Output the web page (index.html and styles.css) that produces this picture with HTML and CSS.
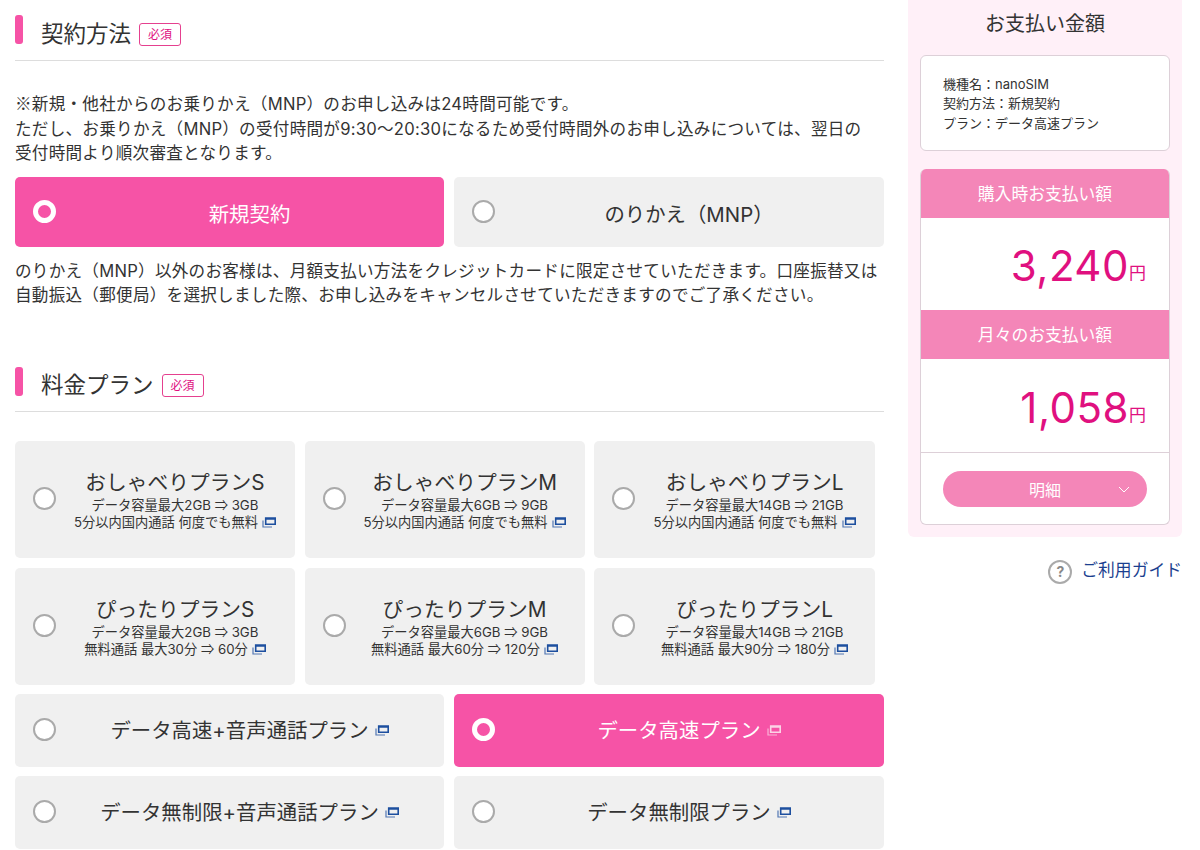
FILE: index.html
```html
<!DOCTYPE html>
<html lang="ja">
<head>
  <meta charset="utf-8">
  <title>お申し込み</title>
  <link rel="stylesheet" href="styles.css">
</head>
<body>
  <svg class="svg-defs" width="0" height="0">
    <symbol id="win" viewBox="0 0 14 11">
      <path d="M3.7 1h9.5v6.3h-9.5z M3.7 2h9.5" fill="none" stroke="currentColor" stroke-width="1.6"/>
      <path d="M1 3.5v6.5h9" fill="none" stroke="currentColor" stroke-width="1.2" opacity=".75"/>
    </symbol>
  </svg>
  <div class="page">
    <main class="main">
      <section class="contract">
        <h2 class="heading">契約方法<span class="required">必須</span></h2>
        <p class="note"><span class="cjk">※</span>新規・他社からのお乗りかえ（MNP）のお申し込みは24時間可能です。<br>ただし、お乗りかえ（MNP）の受付時間が9:30～20:30になるため受付時間外のお申し込みについては、翌日の<br>受付時間より順次審査となります。</p>
        <div class="row-2">
          <div class="choice tall selected"><span class="radio"></span>新規契約</div>
          <div class="choice tall"><span class="radio"></span>のりかえ（MNP）</div>
        </div>
        <p class="note after">のりかえ（MNP）以外のお客様は、月額支払い方法をクレジットカードに限定させていただきます。口座振替又は<br>自動振込（郵便局）を選択しました際、お申し込みをキャンセルさせていただきますのでご了承ください。</p>
      </section>

      <section class="plans">
        <h2 class="heading">料金プラン<span class="required">必須</span></h2>
        <div class="row-3">
          <div class="plan"><span class="radio"></span>
            <div class="plan-name">おしゃべりプランS</div>
            <div class="plan-sub">データ容量最大2GB <span class="cjk">⇒</span> 3GB</div>
            <div class="plan-sub">5分以内国内通話 何度でも無料<svg class="win"><use href="#win"/></svg></div>
          </div>
          <div class="plan"><span class="radio"></span>
            <div class="plan-name">おしゃべりプランM</div>
            <div class="plan-sub">データ容量最大6GB <span class="cjk">⇒</span> 9GB</div>
            <div class="plan-sub">5分以内国内通話 何度でも無料<svg class="win"><use href="#win"/></svg></div>
          </div>
          <div class="plan"><span class="radio"></span>
            <div class="plan-name">おしゃべりプランL</div>
            <div class="plan-sub">データ容量最大14GB <span class="cjk">⇒</span> 21GB</div>
            <div class="plan-sub">5分以内国内通話 何度でも無料<svg class="win"><use href="#win"/></svg></div>
          </div>
          <div class="plan"><span class="radio"></span>
            <div class="plan-name">ぴったりプランS</div>
            <div class="plan-sub">データ容量最大2GB <span class="cjk">⇒</span> 3GB</div>
            <div class="plan-sub">無料通話 最大30分 <span class="cjk">⇒</span> 60分<svg class="win"><use href="#win"/></svg></div>
          </div>
          <div class="plan"><span class="radio"></span>
            <div class="plan-name">ぴったりプランM</div>
            <div class="plan-sub">データ容量最大6GB <span class="cjk">⇒</span> 9GB</div>
            <div class="plan-sub">無料通話 最大60分 <span class="cjk">⇒</span> 120分<svg class="win"><use href="#win"/></svg></div>
          </div>
          <div class="plan"><span class="radio"></span>
            <div class="plan-name">ぴったりプランL</div>
            <div class="plan-sub">データ容量最大14GB <span class="cjk">⇒</span> 21GB</div>
            <div class="plan-sub">無料通話 最大90分 <span class="cjk">⇒</span> 180分<svg class="win"><use href="#win"/></svg></div>
          </div>
        </div>
        <div class="row-2 data-plans">
          <div class="choice wide"><span class="radio"></span>データ高速+音声通話プラン<svg class="win"><use href="#win"/></svg></div>
          <div class="choice wide selected"><span class="radio"></span>データ高速プラン<svg class="win"><use href="#win"/></svg></div>
          <div class="choice wide"><span class="radio"></span>データ無制限+音声通話プラン<svg class="win"><use href="#win"/></svg></div>
          <div class="choice wide"><span class="radio"></span>データ無制限プラン<svg class="win"><use href="#win"/></svg></div>
        </div>
      </section>
    </main>

    <aside class="side">
      <div class="summary">
        <h3 class="summary-title">お支払い金額</h3>
        <div class="info">
          <div>機種名：nanoSIM</div>
          <div>契約方法：新規契約</div>
          <div>プラン：データ高速プラン</div>
        </div>
        <div class="bill">
          <div class="bill-head">購入時お支払い額</div>
          <div class="price first">3,240<span class="yen">円</span></div>
          <div class="bill-head">月々のお支払い額</div>
          <div class="price">1,058<span class="yen">円</span></div>
          <div class="bill-foot">
            <div class="detail">明細
              <svg class="chevron" viewBox="0 0 12 7"><path d="M1 1l5 5 5-5" fill="none" stroke="currentColor" stroke-width="1"/></svg>
            </div>
          </div>
        </div>
      </div>
      <a class="guide" href="#"><span class="guide-icon">?</span>ご利用ガイド</a>
    </aside>
  </div>
</body>
</html>
```

FILE: styles.css
```css
* {
  box-sizing: border-box;
}

body {
  margin: 0;
  height: 850px;
  overflow: hidden;
  background-color: #fff;
  color: #333;
  font-family: Inter, "Noto Sans CJK JP", "Liberation Sans", sans-serif;
}

.svg-defs {
  position: absolute;
}

.cjk {
  font-family: "Noto Sans CJK JP", sans-serif;
  line-height: 1;
}

.page {
  display: flex;
  align-items: flex-start;
  padding-left: 15px;
}

.main {
  width: 869px;
}

.side {
  width: 274px;
  margin-left: 24px;
}

.heading {
  display: flex;
  align-items: center;
  height: 46px;
  margin: 0;
  padding: 0 0 8px 26px;
  position: relative;
  border-bottom: 1px solid #ddd;
  font-size: 22.5px;
  font-weight: 400;
  line-height: 30px;
}

.plans .heading {
  height: 45px;
}

.heading::before {
  content: "";
  position: absolute;
  left: 0;
  top: 0;
  width: 8px;
  height: 29px;
  border-radius: 3px;
  background-color: #f653a6;
}

.contract {
  padding-top: 15px;
}

.plans {
  margin-top: 59px;
}

.required {
  display: inline-block;
  margin-left: 8px;
  margin-top: 1px;
  width: 42px;
  height: 23px;
  border: 1px solid #e5408f;
  border-radius: 3px;
  color: #e0107f;
  font-size: 12px;
  line-height: 21px;
  text-align: center;
}

.note {
  margin: 31px 0 11px;
  font-size: 16.6px;
  letter-spacing: 0.25px;
  line-height: 24.5px;
  white-space: nowrap;
}

.note.after {
  margin: 12px 0 0;
}

.row-2 {
  display: grid;
  grid-template-columns: 429px 430px;
  gap: 10px;
}

.row-3 {
  display: grid;
  grid-template-columns: 280px 280px 281px;
  gap: 10px 9.5px;
  margin-top: 29px;
}

.data-plans {
  margin-top: 9px;
  row-gap: 9px;
}

.radio {
  position: absolute;
  left: 18px;
  top: 50%;
  width: 23px;
  height: 23px;
  margin-top: -12px;
  border: 2px solid #aaa;
  border-radius: 50%;
  background-color: #fff;
}

.choice {
  position: relative;
  display: flex;
  align-items: center;
  justify-content: center;
  padding-left: 40px;
  border-radius: 5px;
  background-color: #f0f0f0;
  font-size: 20.4px;
}

.tall {
  height: 70px;
  padding-top: 3px;
  color: #333;
}

.wide {
  height: 73px;
  padding-bottom: 2px;
}

.selected {
  background-color: #f653a6;
  color: #fff;
}

.selected .radio {
  border: 5px solid #fff;
  background-color: #f653a6;
}

.plan {
  position: relative;
  height: 117px;
  padding: 28px 0 0 40px;
  border-radius: 5px;
  background-color: #f0f0f0;
  text-align: center;
}

.plan-name {
  font-size: 20.75px;
  line-height: 28px;
}

.plan-sub {
  font-size: 13.25px;
  line-height: 17.5px;
  white-space: nowrap;
}

.win {
  width: 14px;
  height: 11px;
  margin-left: 4px;
  color: #1d4f9f;
  flex-shrink: 0;
}

.plan-sub .win {
  vertical-align: -1px;
}

.choice .win {
  margin-left: 6px;
  margin-top: 3px;
}

.selected .win {
  color: #fbd3e6;
}

.summary {
  padding: 0 12px 12px;
  border-radius: 0 0 6px 6px;
  background-color: #fff0f8;
}

.summary-title {
  margin: 0;
  height: 55px;
  font-size: 20px;
  font-weight: 400;
  line-height: 49px;
  text-align: center;
}

.info {
  height: 96px;
  padding: 18.5px 22px;
  border: 1px solid #ddd0d8;
  border-radius: 6px;
  background-color: #fff;
  font-size: 13px;
  line-height: 19.5px;
}

.bill {
  margin-top: 18px;
  border: 1px solid #ddd0d8;
  border-top: 0;
  border-radius: 6px;
  background-color: #fff;
  overflow: hidden;
}

.bill-head {
  height: 49px;
  margin: 0 -1px;
  background-color: #f486b8;
  color: #fff;
  font-size: 16.8px;
  line-height: 50px;
  text-align: center;
}

.price {
  height: 93px;
  padding: 21px 23px 0 0;
  color: #e0107f;
  font-size: 42px;
  font-weight: 400;
  letter-spacing: 0.5px;
  line-height: 56px;
  text-align: right;
}

.price.first {
  height: 92px;
  padding-top: 20px;
}

.yen {
  font-size: 17px;
  font-weight: 400;
  letter-spacing: 0;
  vertical-align: 2px;
}

.bill-foot {
  height: 72px;
  padding-top: 18px;
  border-top: 1px solid #ddd0d8;
}

.detail {
  position: relative;
  width: 204px;
  height: 36px;
  margin: 0 auto;
  border-radius: 18px;
  background-color: #f486b8;
  color: #fff;
  font-size: 16px;
  line-height: 38px;
  text-align: center;
}

.chevron {
  position: absolute;
  right: 17px;
  top: 15px;
  width: 12px;
  height: 7px;
}

.guide {
  display: flex;
  align-items: flex-start;
  justify-content: flex-end;
  margin-top: 21px;
  color: #1b3f8f;
  font-size: 16.8px;
  line-height: 24px;
  text-decoration: none;
}

.guide-icon {
  width: 24px;
  height: 24px;
  margin-top: 2px;
  margin-right: 9px;
  border: 2px solid #aaa;
  border-radius: 50%;
  color: #888;
  font-size: 14px;
  font-weight: 700;
  line-height: 20px;
  text-align: center;
}
```
